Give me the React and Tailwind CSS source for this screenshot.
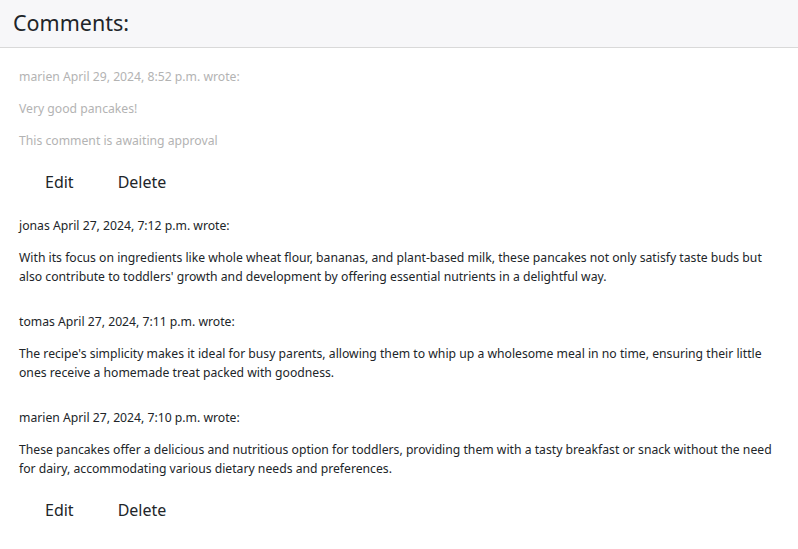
import React from 'react';

const comments = [
  {
    author: 'marien',
    date: 'April 29, 2024, 8:52 p.m.',
    text: 'Very good pancakes!',
    pending: true,
    own: true,
  },
  {
    author: 'jonas',
    date: 'April 27, 2024, 7:12 p.m.',
    text: "With its focus on ingredients like whole wheat flour, bananas, and plant-based milk, these pancakes not only satisfy taste buds but also contribute to toddlers' growth and development by offering essential nutrients in a delightful way.",
  },
  {
    author: 'tomas',
    date: 'April 27, 2024, 7:11 p.m.',
    text: "The recipe's simplicity makes it ideal for busy parents, allowing them to whip up a wholesome meal in no time, ensuring their little ones receive a homemade treat packed with goodness.",
  },
  {
    author: 'marien',
    date: 'April 27, 2024, 7:10 p.m.',
    text: 'These pancakes offer a delicious and nutritious option for toddlers, providing them with a tasty breakfast or snack without the need for dairy, accommodating various dietary needs and preferences.',
    own: true,
  },
];

function Comment({ c }) {
  const tone = c.pending ? 'text-[#b3b3b3]' : 'text-[#212529]';
  return (
    <div className="flex flex-col gap-[12.8px] pb-[25.8px]">
      <p className={tone}>
        {c.author} {c.date} wrote:
      </p>
      <p className={tone}>{c.text}</p>
      {c.pending && <p className={tone}>This comment is awaiting approval</p>}
      {c.own && (
        <div className="flex gap-[18px] pl-[13px] -mb-[11px]">
          <button className="px-[12px] py-[6px] border border-transparent text-[16px] leading-[24px] text-[#212529]">
            Edit
          </button>
          <button className="px-[12px] py-[6px] border border-transparent text-[16px] leading-[24px] text-[#212529]">
            Delete
          </button>
        </div>
      )}
    </div>
  );
}

export default function App() {
  return (
    <div className="min-h-screen bg-white" style={{ fontFamily: '"Noto Sans", sans-serif' }}>
      <div className="bg-[#f7f7f9] border-b border-[#d9d9d9] h-[48px] flex items-center px-[13px]">
        <h3 className="text-[21.5px] text-[#212529]">Comments:</h3>
      </div>
      <div className="px-[19px] pt-[19px] text-[12.2px] leading-[19.2px]">
        {comments.map((c, i) => (
          <Comment key={i} c={c} />
        ))}
      </div>
    </div>
  );
}
